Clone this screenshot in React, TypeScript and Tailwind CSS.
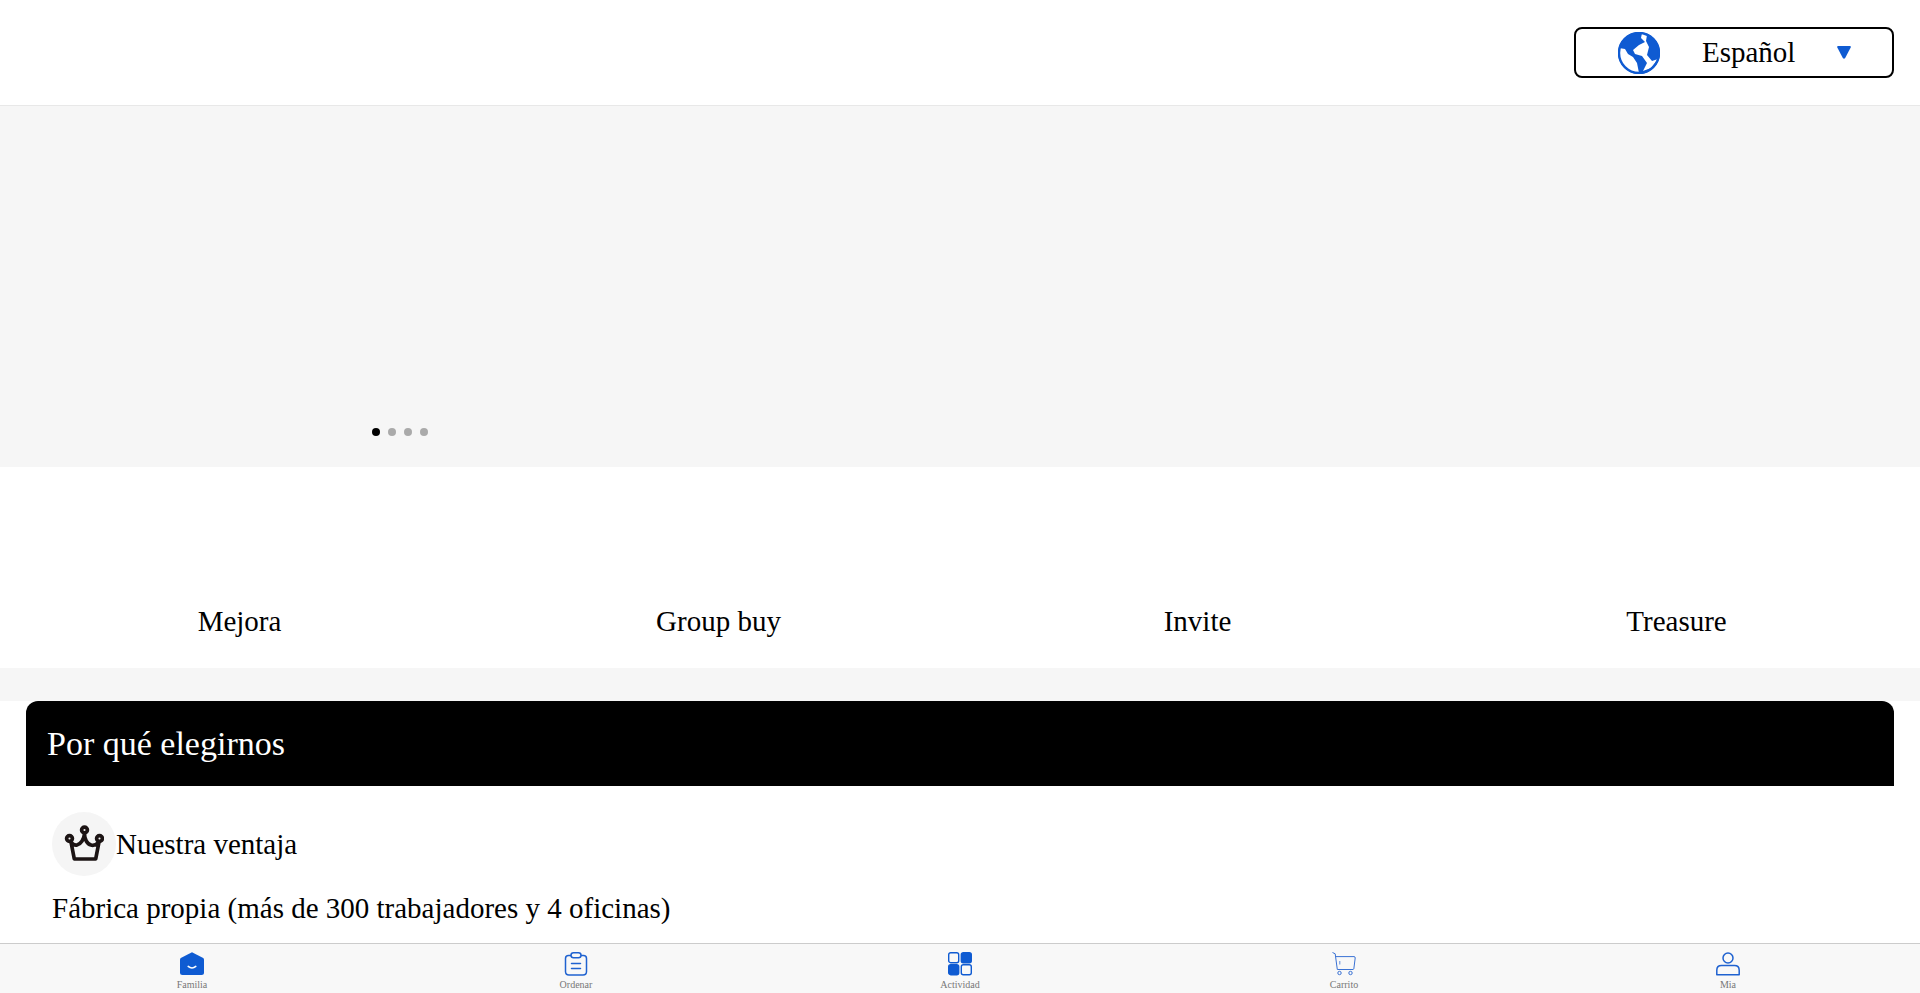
const labels = ["Mejora", "Group buy", "Invite", "Treasure"];

function GlobeIcon() {
  return (
    <svg className="ml-[42px] w-[42px] h-[42px]" viewBox="0 0 42 42">
      <circle cx="21" cy="21" r="21" fill="#0f5bd2" />
      <path d="M24 1 L23 6 L27 10 L21 13 L15 18 L17 22 L24 24 L29 31 L25 39 L33 36 L40 27 L34 29 L29 23 L31 15 L28 9 L29 3 Z" fill="#fff" />
      <path d="M1 16 L7 17 L10 22 L15 25 L19 31 L20 36 L21 41 L12 39 L4 32 L1 24 Z" fill="#fff" />
      <circle cx="21" cy="21" r="20" fill="none" stroke="#0f5bd2" strokeWidth="2.4" />
    </svg>
  );
}

function HomeIcon() {
  return (
    <svg className="w-6 h-6" viewBox="0 0 24 24">
      <path d="M12 0.2 L23.2 6 Q24 6.5 24 7.5 V20.5 Q24 23 21.5 23 H2.5 Q0 23 0 20.5 V7.5 Q0 6.5 0.8 6 Z" fill="#0f5bd2" />
      <path d="M8.2 14.4 Q12 17.6 15.8 14.4" fill="none" stroke="#fff" strokeWidth="1.6" strokeLinecap="round" />
    </svg>
  );
}

function OrderIcon() {
  return (
    <svg className="w-6 h-6" viewBox="0 0 24 24" fill="none" stroke="#1f62d0" strokeWidth="1.5">
      <path d="M7 3.4 H4.5 Q1.5 3.4 1.5 6.4 V19.5 Q1.5 23 5 23 H19 Q22.5 23 22.5 19.5 V6.4 Q22.5 3.4 19.5 3.4 H17" />
      <rect x="7" y="0.8" width="10" height="5" rx="2.5" />
      <path d="M7.5 11.5 H16.5 M7.5 16.5 H16.5" strokeLinecap="round" />
    </svg>
  );
}

function ActivityIcon() {
  return (
    <svg className="w-6 h-6" viewBox="0 0 24 24" fill="none" stroke="#0f5bd2" strokeWidth="1.4">
      <rect x="0.7" y="0.7" width="10" height="10" rx="2" />
      <rect x="13.3" y="0.7" width="10" height="10" rx="2" fill="#0f5bd2" />
      <rect x="0.7" y="12.7" width="10" height="10" rx="2" fill="#0f5bd2" />
      <rect x="13.3" y="12.7" width="10" height="10" rx="2" />
    </svg>
  );
}

function CartIcon() {
  return (
    <svg className="w-6 h-6" viewBox="0 0 24 24" fill="none" stroke="#3a72d4" strokeWidth="1">
      <path d="M0.5 0.5 L3.2 1.8 L5.3 17.5 H21.5" />
      <path d="M3.6 4.6 H22 Q23.3 4.6 23.2 6 L21.8 17" />
      <path d="M7.8 9 V12.5" strokeWidth="0.8" />
      <circle cx="7.5" cy="21" r="1.7" />
      <circle cx="18.5" cy="21" r="1.7" />
    </svg>
  );
}

function UserIcon() {
  return (
    <svg className="w-6 h-6" viewBox="0 0 24 24" fill="none" stroke="#1f62d0" strokeWidth="1.5">
      <circle cx="12" cy="6" r="5" />
      <path d="M5.5 13.5 H18.5 Q23.2 13.5 23.2 18.2 V22.8 H0.8 V18.2 Q0.8 13.5 5.5 13.5 Z" strokeLinejoin="round" />
    </svg>
  );
}

function CrownIcon() {
  return (
    <svg className="w-10 h-10 mt-[2px]" viewBox="0 0 40 40" fill="none" stroke="#1c1414" strokeWidth="3.7">
      <circle cx="20.5" cy="5" r="2.9" />
      <circle cx="5.5" cy="13.5" r="2.9" />
      <circle cx="35.5" cy="13.5" r="2.9" />
      <path d="M7 17 L10.3 34 H31.7 L35 17 C33 19 30 21 27 20 C23 19 20.5 14 20.5 9 C20 14 17 19 13 20 C11 20.5 8.5 19 7 17 Z" strokeLinejoin="round" />
    </svg>
  );
}

const navItems = [
  { label: "Familia", icon: <HomeIcon /> },
  { label: "Ordenar", icon: <OrderIcon /> },
  { label: "Actividad", icon: <ActivityIcon /> },
  { label: "Carrito", icon: <CartIcon /> },
  { label: "Mia", icon: <UserIcon /> },
];

export default function App() {
  return (
    <div className="font-['Liberation_Serif',serif] text-black bg-white">
      {/* Header */}
      <header className="h-[106px] flex justify-end items-start pt-[27px] pr-[26px] border-b border-[#e8e8e8]">
        <div className="w-[320px] h-[51px] border-2 border-black rounded-lg flex items-center">
          <GlobeIcon />
          <span className="ml-[42px] text-[29px] leading-none">Español</span>
          <svg className="ml-[42px] w-[14px] h-[13px]" viewBox="0 0 13 12">
            <path d="M1 0 H12 Q13.2 0 12.7 1.3 L7.6 11 Q6.5 12.5 5.4 11 L0.3 1.3 Q-0.2 0 1 0 Z" fill="#0f5bd2" />
          </svg>
        </div>
      </header>

      {/* Banner */}
      <div className="relative h-[361px] bg-[#f6f6f6]">
        <div className="absolute left-[372px] top-[322px] flex gap-2">
          <span className="w-2 h-2 rounded-full bg-black" />
          <span className="w-2 h-2 rounded-full bg-[#aaaaaa]" />
          <span className="w-2 h-2 rounded-full bg-[#aaaaaa]" />
          <span className="w-2 h-2 rounded-full bg-[#aaaaaa]" />
        </div>
      </div>

      {/* Shortcuts */}
      <div className="h-[201px] w-[1916px] grid grid-cols-4 items-end pb-[30px]">
        {labels.map((label) => (
          <div key={label} className="text-center text-[29px] leading-[34px]">{label}</div>
        ))}
      </div>

      <div className="h-[33px] bg-[#f6f6f6]" />

      {/* Why us */}
      <section className="mx-[26px]">
        <h2 className="h-[85px] bg-black rounded-t-xl flex items-center px-[21px] text-white text-[34px]">
          Por qué elegirnos
        </h2>
        <div className="pt-[26px] px-[26px]">
          <div className="flex items-center">
            <div className="w-16 h-16 rounded-full bg-[#f5f5f5] flex items-center justify-center">
              <CrownIcon />
            </div>
            <span className="text-[29px] pt-[2px]">Nuestra ventaja</span>
          </div>
          <p className="mt-[16px] text-[29px] leading-[32px]">Fábrica propia (más de 300 trabajadores y 4 oficinas)</p>
        </div>
      </section>

      {/* Bottom nav */}
      <nav className="fixed bottom-0 inset-x-0 h-[50px] bg-[#f8f8f8] border-t border-[#cccccc] grid grid-cols-5">
        {navItems.map((item) => (
          <div key={item.label} className="flex flex-col items-center pt-2">
            {item.icon}
            <span className="text-[10px] leading-[14px] mt-[2px] text-[#777777]">{item.label}</span>
          </div>
        ))}
      </nav>
    </div>
  );
}
